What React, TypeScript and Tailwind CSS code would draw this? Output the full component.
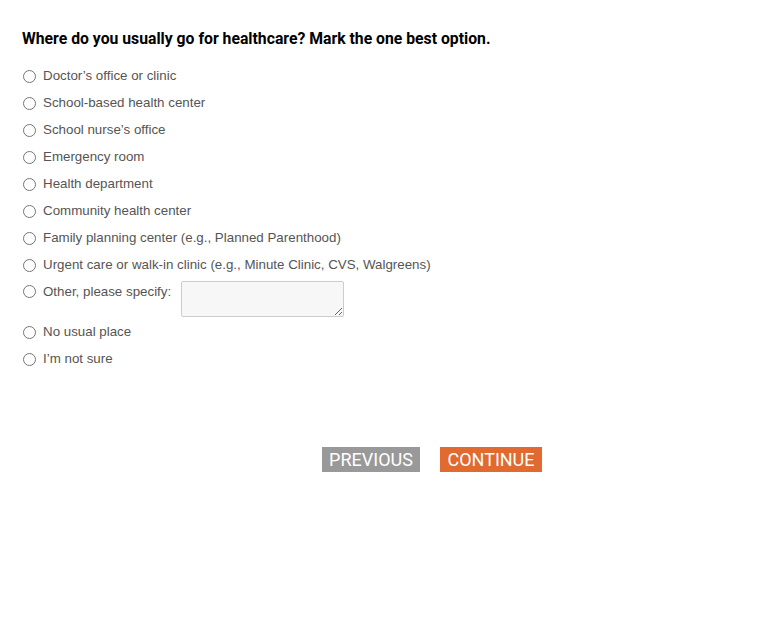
import React from 'react'

const options = [
  "Doctor\u2019s office or clinic",
  'School-based health center',
  "School nurse\u2019s office",
  'Emergency room',
  'Health department',
  'Community health center',
  'Family planning center (e.g., Planned Parenthood)',
  'Urgent care or walk-in clinic (e.g., Minute Clinic, CVS, Walgreens)',
]

const Radio = () => (
  <span className="mt-[1px] inline-block h-[13px] w-[13px] shrink-0 rounded-full border border-[#767676] bg-white" />
)

const Option = ({ label }: { label: string }) => (
  <label className="flex h-[27px] items-center gap-[7px] text-[13.33px] text-[#555]">
    <Radio />
    <span>{label}</span>
  </label>
)

const App = () => {
  return (
    <div className="min-h-[630px] w-[777px] bg-white pt-[27px] pl-[22px]" style={{ fontFamily: '"Liberation Sans", Arial, sans-serif' }}>
      <h2 className="text-[15.75px] font-bold text-black" style={{ fontFamily: 'Roboto, "Liberation Sans", sans-serif' }}>
        Where do you usually go for healthcare? Mark the one best option.
      </h2>
      <div className="mt-[12px] flex flex-col pl-[1px]">
        {options.map((o) => (
          <Option key={o} label={o} />
        ))}
        <div className="flex items-start gap-[7px] pt-[2px] text-[13.33px] text-[#555]">
          <span className="mt-[3px]"><Radio /></span>
          <span className="pt-[1px]">Other, please specify:</span>
          <textarea className="ml-[3px] h-[36px] w-[163px] rounded-[2px] border border-[#ccc] bg-[#f7f7f7]" />
        </div>
        <div className="h-[2px]" />
        <Option label="No usual place" />
        <Option label={"I\u2019m not sure"} />
      </div>
      <div className="mt-[74px] flex gap-[20px] pl-[300px]" style={{ fontFamily: 'Roboto, sans-serif' }}>
        <button className="h-[25px] w-[98px] bg-[#999] text-[18px] leading-[25px] text-white">PREVIOUS</button>
        <button className="h-[25px] w-[102px] bg-[#e06a2f] text-[18px] leading-[25px] text-white">CONTINUE</button>
      </div>
    </div>
  )
}

export default App
